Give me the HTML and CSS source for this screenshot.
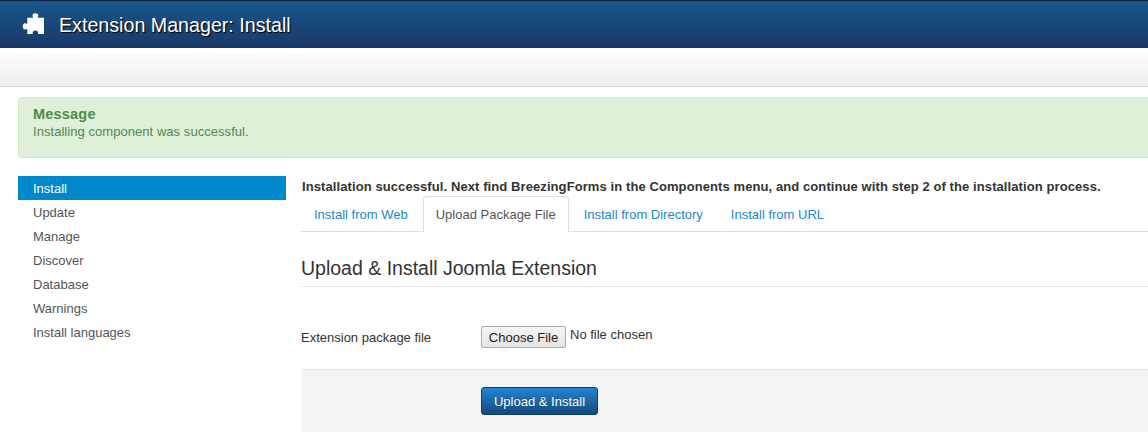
FILE: index.html
```html
<!DOCTYPE html>
<html lang="en">
<head>
<meta charset="utf-8">
<title>Extension Manager: Install</title>
<link rel="stylesheet" href="styles.css">
</head>
<body>
<header class="topbar">
  <svg class="puzzle" viewBox="0 0 23 21" aria-hidden="true"><path d="M5.300 4.800H11c.4-.6-.5-1.200-.5-2.200C10.500 1.100 11.800.3 13.400.3s2.900.8 2.900 2.300c0 1-.9 1.600-.5 2.200H22V21h-6c.4-.8.300-1.600-.3-2.400-.5-.7-1.300-1-2.300-1s-1.800.3-2.300 1c-.6.8-.7 1.600-.3 2.400H5.300v-5c-.6-.3-1.200.5-2.300.5C1.700 16.500.7 15 .7 13.400S1.700 10.300 3 10.300c1.100 0 1.700.8 2.300.5z"/></svg>
  <h1 class="page-title">Extension Manager: Install</h1>
</header>
<div class="subhead"></div>
<main class="content">
  <div class="alert">
    <h4 class="alert-title">Message</h4>
    <p class="alert-text">Installing component was successful.</p>
  </div>
  <div class="columns">
    <nav class="sidebar">
      <a class="side-link active" href="#">Install</a>
      <a class="side-link" href="#">Update</a>
      <a class="side-link" href="#">Manage</a>
      <a class="side-link" href="#">Discover</a>
      <a class="side-link" href="#">Database</a>
      <a class="side-link" href="#">Warnings</a>
      <a class="side-link" href="#">Install languages</a>
    </nav>
    <section class="main">
      <p class="notice">Installation successful. Next find BreezingForms in the Components menu, and continue with step 2 of the installation process.</p>
      <ul class="tabs">
        <li class="tab"><a href="#">Install from Web</a></li>
        <li class="tab active"><a href="#">Upload Package File</a></li>
        <li class="tab"><a href="#">Install from Directory</a></li>
        <li class="tab"><a href="#">Install from URL</a></li>
      </ul>
      <h2 class="legend">Upload &amp; Install Joomla Extension</h2>
      <div class="field">
        <label class="field-label" for="pkg">Extension package file</label>
        <input class="file-input" id="pkg" type="file">
      </div>
      <div class="actions">
        <button class="btn-primary" type="button">Upload &amp; Install</button>
      </div>
    </section>
  </div>
</main>
</body>
</html>
```
FILE: styles.css
```css
html, body {
  margin: 0;
  padding: 0;
  height: 432px;
  overflow: hidden;
  background: #fff;
}
body {
  font-family: "Liberation Sans", Arial, sans-serif;
  font-size: 13px;
  line-height: 18px;
  color: #333;
}
.topbar {
  height: 47px;
  border-top: 1px solid #0b1f3d;
  display: flex;
  align-items: center;
  background: linear-gradient(to bottom, #17568c, #1a3867);
}
.puzzle {
  width: 23px;
  height: 21px;
  margin-left: 22px;
  margin-top: -2px;
  fill: #fff;
}
.page-title {
  margin: 0 0 0 14px;
  font-size: 19.66px;
  font-weight: 400;
  line-height: 24px;
  color: #fff;
  text-shadow: 1px 1px 1px #000;
}
.subhead {
  height: 38px;
  border-bottom: 1px solid #d6d6d6;
  background: linear-gradient(to bottom, #fff, #eee);
}
.content {
  padding: 10px 0 0 18px;
}
.alert {
  height: 59px;
  margin-right: -12px;
  padding-left: 14px;
  border: 1px solid #d6e9c6;
  border-radius: 4px;
  background: #dff0d8;
  color: #4f8a50;
}
.alert-title {
  margin: 8px 0 0;
  font-size: 14.5px;
  line-height: 17px;
  font-weight: 700;
  letter-spacing: .2px;
}
.alert-text {
  margin: 1px 0 0;
  font-size: 13px;
  letter-spacing: .05px;
  line-height: 16px;
}
.columns {
  display: flex;
  gap: 15px;
  margin-top: 18px;
}
.sidebar {
  width: 268px;
  flex: none;
  display: flex;
  flex-direction: column;
}
.side-link {
  height: 24px;
  padding-left: 15px;
  line-height: 25px;
  color: #555;
  text-decoration: none;
  font-size: 13px;
}
.side-link.active {
  background: #0088cc;
  color: #fff;
}
.main {
  flex: 1;
  min-width: 0;
}
.notice {
  margin: 0 0 0 1px;
  height: 20px;
  font-weight: 700;
  font-size: 13px;
  letter-spacing: .09px;
  line-height: 22px;
  white-space: nowrap;
}
.tabs {
  list-style: none;
  margin: 0;
  padding: 0;
  display: flex;
  height: 35px;
  border-bottom: 1px solid #ddd;
  gap: 2px;
}
.tab {
  height: 36px;
  box-sizing: border-box;
  border: 1px solid transparent;
  border-bottom: 0;
  border-radius: 4px 4px 0 0;
}
.tab a {
  display: block;
  padding: 0 12px;
  line-height: 36px;
  font-size: 13px;
  color: #2384d3;
  text-decoration: none;
}
.tab.active {
  background: #fff;
  border-color: #ddd;
}
.tab.active a {
  color: #555;
}
.legend {
  margin: 22px 0 0;
  padding-bottom: 3px;
  height: 29px;
  border-bottom: 1px solid #e5e5e5;
  font-size: 19.5px;
  font-weight: 400;
  line-height: 29px;
}
.field {
  display: flex;
  align-items: flex-start;
  height: 82px;
  box-sizing: border-box;
  padding-top: 39px;
}
.field-label {
  width: 180px;
  flex: none;
  font-size: 13px;
  line-height: 24px;
}
.file-input {
  font-family: inherit;
  font-size: 13px;
  color: #333;
}
.file-input::file-selector-button {
  height: 22px;
  width: 85px;
  padding: 0;
  margin-right: 4px;
  vertical-align: -3px;
  font-family: inherit;
  font-size: 13px;
  color: #222;
  border: 1px solid #aaa;
  border-radius: 2px;
  background: linear-gradient(to bottom, #f5f5f5, #e4e4e4);
}
.actions {
  height: 63px;
  border-top: 1px solid #e5e5e5;
  background: #f4f4f4;
  padding: 17px 0 0 180px;
}
.btn-primary {
  width: 117px;
  height: 28px;
  padding: 0;
  font-family: inherit;
  font-size: 13px;
  color: #fff;
  text-shadow: 0 -1px 0 rgba(0,0,0,.25);
  border: 1px solid #0f3d6e;
  border-radius: 3px;
  background: linear-gradient(to bottom, #2384d3, #15497c);
}
```
